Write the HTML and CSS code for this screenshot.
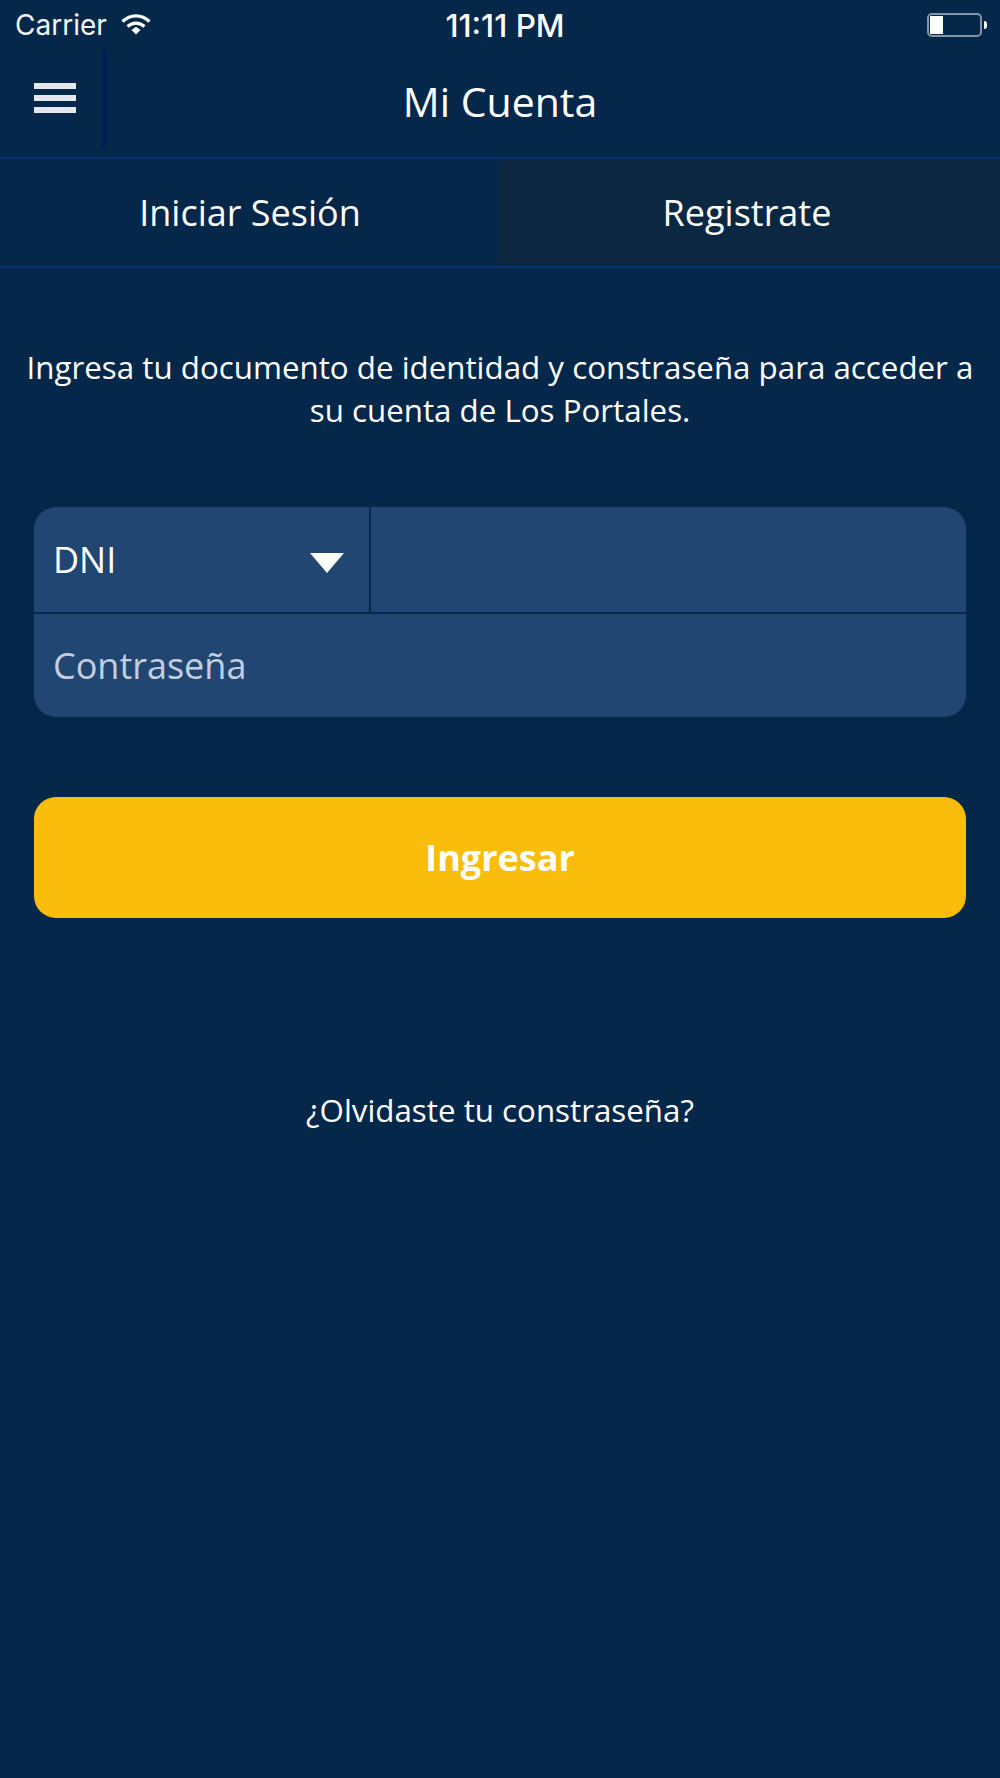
FILE: index.html
```html
<!DOCTYPE html>
<html lang="es">
<head>
	<meta charset="UTF-8">
	<title>Mi Cuenta</title>
	<link rel="stylesheet" href="styles.css">
</head>
<body>
	<div class="status">
		<div class="status-left">
			<span class="carrier">Carrier</span>
			<svg class="wifi" width="30" height="22" viewBox="0 0 30 22">
				<path d="M1.500 8.500C9.500 1 20.500 1 28.500 8.500" fill="none" stroke="#fff" stroke-width="3.200"/>
				<path d="M6.500 13.500C11.500 9 18.500 9 23.500 13.500" fill="none" stroke="#fff" stroke-width="3.200"/>
				<path d="M10.500 17L15 13.800L19.500 17L15 21.500Z" fill="#fff"/>
			</svg>
		</div>
		<span class="time">11:11 PM</span>
		<div class="battery">
			<div class="battery-body"><div class="battery-level"></div></div>
			<div class="battery-tip"></div>
		</div>
	</div>

	<div class="header">
		<div class="menu-btn">
			<span></span>
			<span></span>
			<span></span>
		</div>
		<h1>Mi Cuenta</h1>
	</div>

	<div class="tabs">
		<div class="tab">Iniciar Sesión</div>
		<div class="tab tab-dark">Registrate</div>
	</div>

	<p class="intro">Ingresa tu documento de identidad y constraseña para acceder a su cuenta de Los Portales.</p>

	<div class="form">
		<div class="row row-doc">
			<div class="doc-type">
				<span>DNI</span>
				<i class="arrow"></i>
			</div>
			<div class="doc-number"></div>
		</div>
		<div class="row row-pass">Contraseña</div>
	</div>

	<div class="btn">Ingresar</div>

	<p class="forgot">¿Olvidaste tu constraseña?</p>
</body>
</html>
```

FILE: styles.css
```css
*{
	margin: 0;
	padding: 0;
	box-sizing: border-box;
}
html,body{
	height: 100%;
}
body{
	background: #05274a;
	color: #fff;
	font-family: "Open Sans", sans-serif;
	overflow: hidden;
}
.status{
	height: 50px;
	display: flex;
	align-items: center;
	justify-content: space-between;
	padding: 0 15px;
	position: relative;
}
.status-left{
	display: flex;
	align-items: center;
	gap: 14px;
}
.carrier{
	font-family: Inter, sans-serif;
	font-size: 28px;
	color: #f4f6f8;
}
.wifi{
	margin-top: -2px;
}
.time{
	position: absolute;
	left: 0;
	right: -10px;
	text-align: center;
	font-family: Inter, sans-serif;
	font-weight: 500;
	font-size: 31.5px;
}
.battery{
	display: flex;
	align-items: center;
	gap: 2px;
	margin-right: -2px;
}
.battery-body{
	width: 55px;
	height: 24px;
	border: 2px solid #8496ab;
	border-radius: 5px;
	padding: 1px;
}
.battery-level{
	width: 13px;
	height: 100%;
	background: #fff;
}
.battery-tip{
	width: 3px;
	height: 8px;
	background: #fff;
	border-radius: 0 3px 3px 0;
}
.header{
	height: 109px;
	display: flex;
	align-items: center;
	justify-content: center;
	position: relative;
	border-bottom: 2px solid #07316f;
}
.menu-btn{
	position: absolute;
	left: 0;
	top: 0;
	width: 106px;
	height: 97px;
	border-right: 3px solid #00185c;
	padding: 33px 0 0 34px;
}
.menu-btn span{
	display: block;
	width: 42px;
	height: 6px;
	background: #e4e8ee;
	margin-bottom: 6px;
	filter: blur(0.5px);
}
.header h1{
	font-size: 41px;
	font-weight: 400;
	margin-top: -5px;
}
.tabs{
	height: 109px;
	display: flex;
	border-bottom: 2px solid #07316f;
}
.tab{
	flex: 1;
	display: flex;
	align-items: center;
	justify-content: center;
	font-size: 36px;
}
.tab:first-child{
	flex: 0 0 498px;
	padding-left: 2px;
}
.tab-dark{
	background: #0b2741;
	padding-right: 4px;
}
.intro{
	padding: 0 20px;
	margin-top: 78px;
	text-align: center;
	font-size: 31.3px;
	line-height: 43px;
}
.form{
	margin: 75px 34px 0;
	height: 210px;
	background: #224672;
	border-radius: 22px;
	overflow: hidden;
}
.row-doc{
	height: 107px;
	display: flex;
	border-bottom: 2px solid #05274a;
}
.doc-type{
	width: 337px;
	border-right: 2px solid #05274a;
	display: flex;
	align-items: center;
	justify-content: space-between;
	padding: 0 25px 0 19px;
	font-size: 36px;
}
.arrow{
	width: 0;
	height: 0;
	margin-top: 6px;
	border-left: 17px solid transparent;
	border-right: 17px solid transparent;
	border-top: 20px solid #fff;
}
.row-pass{
	height: 103px;
	display: flex;
	align-items: center;
	padding-left: 19px;
	font-size: 36px;
	color: #c3cfe0;
}
.btn{
	margin: 80px 34px 0;
	height: 121px;
	background: #fabd0b;
	border-radius: 22px;
	display: flex;
	align-items: center;
	justify-content: center;
	font-size: 36px;
	font-weight: 700;
}
.forgot{
	margin-top: 171px;
	text-align: center;
	font-size: 31.3px;
	line-height: 43px;
}
```
